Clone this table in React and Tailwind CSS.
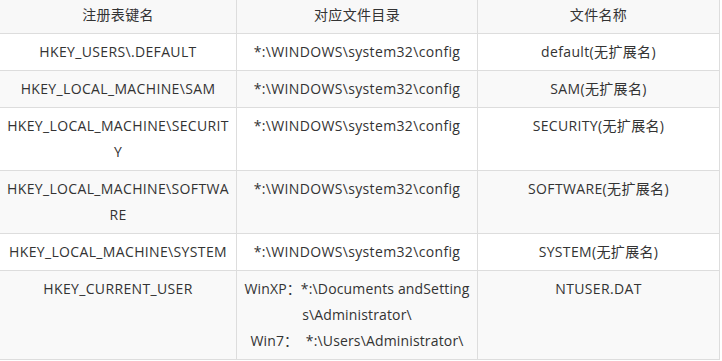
import React from "react";

const rows = [
  ["HKEY_USERS\\.DEFAULT", "*:\\WINDOWS\\system32\\config", "default(无扩展名)"],
  ["HKEY_LOCAL_MACHINE\\SAM", "*:\\WINDOWS\\system32\\config", "SAM(无扩展名)"],
  ["HKEY_LOCAL_MACHINE\\SECURITY", "*:\\WINDOWS\\system32\\config", "SECURITY(无扩展名)"],
  ["HKEY_LOCAL_MACHINE\\SOFTWARE", "*:\\WINDOWS\\system32\\config", "SOFTWARE(无扩展名)"],
  ["HKEY_LOCAL_MACHINE\\SYSTEM", "*:\\WINDOWS\\system32\\config", "SYSTEM(无扩展名)"],
];

const cell =
  "border border-[#dddddd] px-[6px] pt-[5px] pb-[5px] align-top text-center break-all";

export default function App() {
  return (
    <div
      className="w-[722px] h-[361px] overflow-hidden bg-white text-[14px] leading-[26px] tracking-[0.35px] text-[#333333]"
      style={{ fontFamily: '"Open Sans", "Noto Sans CJK SC", sans-serif' }}
    >
      <table className="ml-[-1px] mt-[-4px] w-[720px] table-fixed border-collapse">
        <colgroup>
          <col className="w-[237px]" />
          <col className="w-[241px]" />
          <col className="w-[242px]" />
        </colgroup>
        <thead>
          <tr className="bg-[#f8f8f8]">
            <th className={cell + " font-normal"}>注册表键名</th>
            <th className={cell + " font-normal"}>对应文件目录</th>
            <th className={cell + " font-normal"}>文件名称</th>
          </tr>
        </thead>
        <tbody>
          {rows.map((r, i) => (
            <tr key={i} className={i % 2 === 1 ? "bg-[#f9f9f9]" : "bg-white"}>
              <td className={cell}>{r[0]}</td>
              <td className={cell}>{r[1]}</td>
              <td className={cell}>{r[2]}</td>
            </tr>
          ))}
          <tr className="bg-[#f9f9f9]">
            <td className={cell}>HKEY_CURRENT_USER</td>
            <td className={cell + " tracking-[0.15px]"}>
              WinXP：*:\Documents andSettings\Administrator\
              <br />
              Win7：&nbsp; *:\Users\Administrator\
            </td>
            <td className={cell}>NTUSER.DAT</td>
          </tr>
        </tbody>
      </table>
    </div>
  );
}
